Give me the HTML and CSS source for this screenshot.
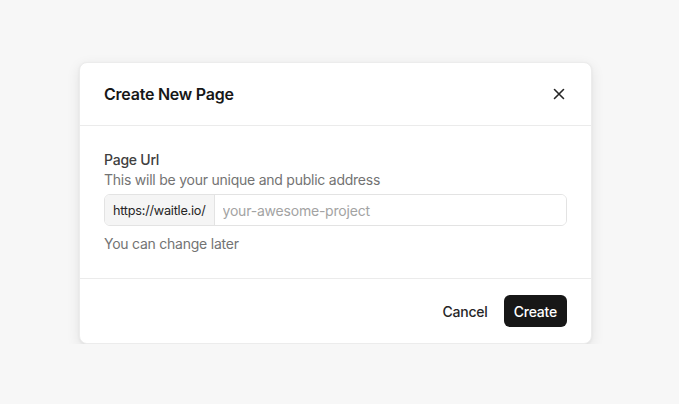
FILE: index.html
```html
<!DOCTYPE html>
<html>

<head>
    <link rel="stylesheet" href="styles.css">
</head>

<body>
    <div class="modal">
        <div class="modal-header">
            <h2 class="modal-title">Create New Page</h2>
            <button class="close-btn" aria-label="Close">
                <svg width="16" height="16" viewBox="0 0 16 16" fill="none" stroke="#262626" stroke-width="1.6" stroke-linecap="round">
                    <path d="M3.5 3.5l9 9M12.5 3.5l-9 9" />
                </svg>
            </button>
        </div>

        <div class="modal-body">
            <div class="field-label">Page Url</div>
            <div class="field-hint">This will be your unique and public address</div>
            <div class="input-group">
                <span class="input-prefix">https://waitle.io/</span>
                <input type="text" class="input" placeholder="your-awesome-project" />
            </div>
            <div class="field-note">You can change later</div>
        </div>

        <div class="modal-footer">
            <button class="btn btn-ghost">Cancel</button>
            <button class="btn btn-dark">Create</button>
        </div>
    </div>
</body>

</html>
```

FILE: styles.css
```css
* {
    box-sizing: border-box;
}

body {
    margin: 0;
    padding-top: 62px;
    background-color: #f7f7f7;
    font-family: Inter, "Liberation Sans", sans-serif;
    letter-spacing: -0.015em;
}

.modal {
    width: 513px;
    margin-left: 79px;
    background-color: #ffffff;
    border: 1px solid #ececec;
    border-radius: 8px;
    box-shadow: 0 4px 14px rgba(0, 0, 0, 0.09), 0 1px 3px rgba(0, 0, 0, 0.05);
}

.modal-header {
    height: 63px;
    padding: 0 24px;
    display: flex;
    align-items: center;
    justify-content: space-between;
    border-bottom: 1px solid #ebebeb;
}

.modal-title {
    margin: 0;
    font-size: 16px;
    font-weight: 600;
    color: #171717;
}

.close-btn {
    border: none;
    background: none;
    padding: 0;
    width: 16px;
    height: 16px;
    display: flex;
    cursor: pointer;
}

.modal-body {
    padding: 24px;
    border-bottom: 1px solid #ebebeb;
}

.field-label {
    font-size: 14px;
    line-height: 20px;
    font-weight: 500;
    color: #404040;
}

.field-hint,
.field-note {
    font-size: 14px;
    line-height: 20px;
    color: #737373;
}

.field-note {
    margin-top: 8px;
}

.input-group {
    margin-top: 4px;
    height: 32px;
    display: flex;
    border: 1px solid #e3e3e3;
    border-radius: 6px;
    overflow: hidden;
}

.input-prefix {
    padding: 0 8px;
    display: flex;
    align-items: center;
    font-size: 12.7px;
    color: #262626;
    background-color: #f5f5f5;
    border-right: 1px solid #e3e3e3;
}

.input {
    flex: 1;
    border: none;
    outline: none;
    padding: 0 8px;
    font-family: inherit;
    font-size: 14px;
    letter-spacing: -0.015em;
    color: #262626;
}

.input::placeholder {
    color: #a3a3a3;
}

.modal-footer {
    height: 64px;
    padding: 0 24px;
    display: flex;
    align-items: center;
    justify-content: flex-end;
    gap: 4px;
}

.btn {
    height: 32px;
    padding: 0 12px;
    border: none;
    border-radius: 6px;
    font-family: inherit;
    font-size: 14px;
    font-weight: 500;
    letter-spacing: -0.015em;
    cursor: pointer;
}

.btn-ghost {
    background: none;
    color: #262626;
}

.btn-dark {
    padding: 0 10px;
    background-color: #171717;
    color: #ffffff;
}
```
